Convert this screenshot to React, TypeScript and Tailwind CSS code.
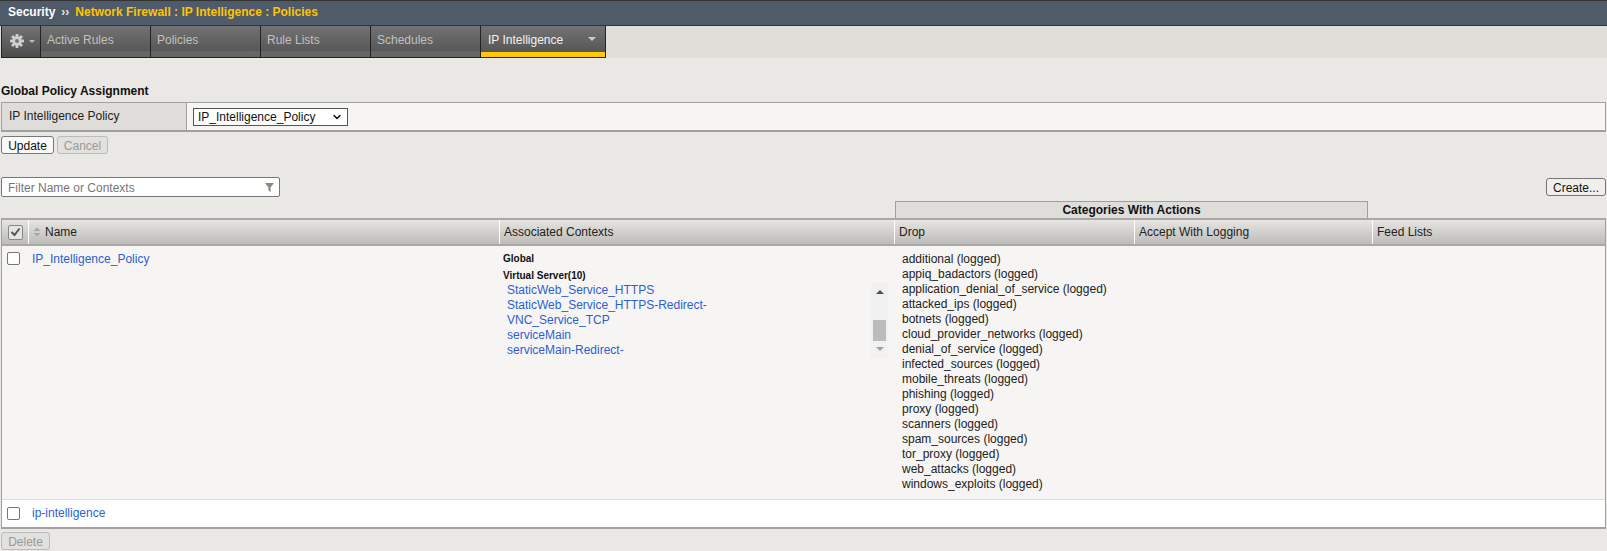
import { ChevronDown } from 'lucide-react'

const tabs = ['Active Rules', 'Policies', 'Rule Lists', 'Schedules']

const contexts = [
  'StaticWeb_Service_HTTPS',
  'StaticWeb_Service_HTTPS-Redirect-',
  'VNC_Service_TCP',
  'serviceMain',
  'serviceMain-Redirect-',
]

const dropCategories = [
  'additional',
  'appiq_badactors',
  'application_denial_of_service',
  'attacked_ips',
  'botnets',
  'cloud_provider_networks',
  'denial_of_service',
  'infected_sources',
  'mobile_threats',
  'phishing',
  'proxy',
  'scanners',
  'spam_sources',
  'tor_proxy',
  'web_attacks',
  'windows_exploits',
]

const headerCell =
  'flex items-center border-l border-white bg-gradient-to-b from-[#e6e5e1] to-[#bdbcb8] pl-[4px] text-[#222]'

const Checkbox = () => (
  <span className="block h-[13px] w-[13px] rounded-[2px] border border-[#767676] bg-white" />
)

const Gear = () => (
  <svg width="14" height="14" viewBox="0 0 14 14">
    <g fill="#cfcfcf">
      <circle cx="7" cy="7" r="4.8" />
      <rect x="5.6" y="0" width="2.8" height="14" />
      <rect x="5.6" y="0" width="2.8" height="14" transform="rotate(45 7 7)" />
      <rect x="5.6" y="0" width="2.8" height="14" transform="rotate(90 7 7)" />
      <rect x="5.6" y="0" width="2.8" height="14" transform="rotate(135 7 7)" />
    </g>
    <circle cx="7" cy="7" r="2" fill="#777" />
  </svg>
)

export default function App() {
  return (
    <div className="h-[551px] w-[1607px] overflow-hidden bg-[#e9e8e4] font-['Liberation_Sans',Arial,sans-serif] text-[12px] text-[#111]">
      {/* Breadcrumb */}
      <div className="flex h-[26px] items-center border-t border-[#333] border-b border-b-[#2f3640] bg-[#505b69] pb-[2px] pl-[8px] font-bold">
        <span className="text-white">Security</span>
        <span className="ml-[6px] mr-[6px] text-[#e8e8e8]">››</span>
        <span className="text-[#ffc400]">Network Firewall : IP Intelligence : Policies</span>
      </div>

      {/* Tabs */}
      <div className="flex h-[32px] bg-[#dfded9] pl-px">
        <div className="flex w-[39px] items-center gap-[5px] border-b border-l border-[#222] bg-gradient-to-b from-[#737373] to-[#4d4d4d] pl-[8px] pb-[2px]">
          <Gear />
          <span className="mt-[2px] h-0 w-0 border-x-[3px] border-t-[3px] border-x-transparent border-t-[#bbb]" />
        </div>
        {tabs.map((tab) => (
          <div
            key={tab}
            className="flex w-[110px] flex-col border-l border-b border-[#222] bg-gradient-to-b from-[#737373] to-[#515151] text-[#c0c0c0]"
          >
            <div className="flex flex-1 items-start pl-[6px] pt-[5px]">{tab}</div>
            <div className="h-[6px] bg-[#666]" />
          </div>
        ))}
        <div className="flex w-[126px] flex-col border-x border-b border-[#222] bg-gradient-to-b from-[#737373] to-[#515151] text-[#f2f2f2]">
          <div className="flex flex-1 items-start justify-between pl-[7px] pr-[9px] pt-[5px]">
            <span>IP Intelligence</span>
            <span className="mt-[6px] h-0 w-0 border-x-[4px] border-t-[4px] border-x-transparent border-t-[#ccc]" />
          </div>
          <div className="h-[5px] bg-[#ffc800]" />
        </div>
      </div>

      {/* Global policy */}
      <div className="pt-[26px] pl-[1px] font-bold leading-[15px] text-[#111]">Global Policy Assignment</div>
      <div className="mx-[1px] mt-[3px] flex h-[30px] border-y-[1px] border-r border-[#a0a0a0] border-b-2">
        <div className="w-[186px] border-x border-[#a0a0a0] bg-[#dedddA] pl-[7px] pt-[4px] text-[#222]">
          IP Intelligence Policy
        </div>
        <div className="flex flex-1 items-start bg-[#f6f5f3] pl-[6px] pt-[5px]">
          <div className="flex h-[18px] w-[155px] items-center justify-between border border-[#555] bg-white pl-[4px] pr-[4px] text-[#111]">
            IP_Intelligence_Policy
            <ChevronDown size={12} strokeWidth={3} />
          </div>
        </div>
      </div>

      <div className="ml-[1px] mt-[4px] flex gap-[3px]">
        <button className="h-[18px] w-[53px] rounded-[3px] border border-[#777] bg-white/80 pb-[1px] text-[#111]">Update</button>
        <button className="h-[18px] w-[51px] rounded-[3px] border border-[#bbb] bg-[#e2e1dd] pb-[1px] text-[#999]">Cancel</button>
      </div>

      {/* Filter and create */}
      <div className="mt-[23px] flex items-start justify-between pl-[1px] pr-[1px]">
        <div className="flex h-[20px] w-[279px] items-center justify-between rounded-[2px] border border-[#777] bg-white pl-[6px] pr-[5px] pt-[1px] text-[#777]">
          Filter Name or Contexts
          <svg width="9" height="9" viewBox="0 0 12 12">
            <path d="M0 0h12L7.5 5.5V12l-3-2V5.5z" fill="#8a8a80" />
          </svg>
        </div>
        <button className="mt-[1px] h-[18px] w-[60px] rounded-[3px] border border-[#777] bg-[#f0efec] pb-[1px] text-[#111]">Create...</button>
      </div>

      {/* Column group */}
      <div className="mt-[4px] ml-[895px] flex h-[17px] w-[473px] items-center justify-center border border-b-0 border-[#a0a0a0] bg-[#dedddA] font-bold">
        Categories With Actions
      </div>

      {/* Table */}
      <div className="mx-[1px] w-[1605px] border-x border-b-2 border-[#a0a0a0]">
        <div className="flex h-[28px] border-y-2 border-[#a8a8a8]">
          <div className="flex w-[26px] items-center justify-center bg-gradient-to-b from-[#e6e5e1] to-[#bdbcb8]">
            <span className="flex h-[15px] w-[15px] items-center justify-center rounded-[2px] border border-[#888] bg-[#e4e4e4]">
              <svg width="11" height="10" viewBox="0 0 11 10">
                <path d="M1.5 5l3 3 5-6.5" fill="none" stroke="#555" strokeWidth="2" />
              </svg>
            </span>
          </div>
          <div className={`${headerCell} w-[471px]`}>
            <svg width="8" height="10" viewBox="0 0 8 10" className="mr-[4px]">
              <path d="M4 0.5L7.5 4H0.5zM4 9.5L7.5 6H0.5z" fill="#a8a8a4" />
            </svg>
            Name
          </div>
          <div className={`${headerCell} w-[395px]`}>Associated Contexts</div>
          <div className={`${headerCell} w-[240px]`}>Drop</div>
          <div className={`${headerCell} w-[238px]`}>Accept With Logging</div>
          <div className={`${headerCell} flex-1`}>Feed Lists</div>
        </div>

        <div className="flex h-[254px] border-b border-[#dcdcdc] bg-[#f6f5f3]">
          <div className="w-[26px] pl-[5px] pt-[6px]">
            <Checkbox />
          </div>
          <div className="w-[471px] pl-[4px] pt-[6px] leading-[15px] text-[#2d5fd0]">IP_Intelligence_Policy</div>
          <div className="relative w-[395px] pl-[4px] pt-[5px] leading-[15px]">
            <div className="text-[10px] font-bold">Global</div>
            <div className="mt-[2px] text-[10px] font-bold">Virtual Server(10)</div>
            <div className="pl-[4px] text-[#2d5fd0]">
              {contexts.map((name) => (
                <div key={name}>{name}</div>
              ))}
            </div>
            <div className="absolute left-[372px] top-[37px] flex h-[75px] w-[17px] flex-col items-center bg-[#f1f1f1]">
              <span className="mt-[7px] h-0 w-0 border-x-[4px] border-b-[4px] border-x-transparent border-b-[#505050]" />
              <span className="mt-[26px] h-[21px] w-[13px] bg-[#bcbcbc]" />
              <span className="mt-[6px] h-0 w-0 border-x-[4px] border-t-[4px] border-x-transparent border-t-[#a0a0a0]" />
            </div>
          </div>
          <div className="pl-[8px] pt-[6px] leading-[15px] text-[#222]">
            {dropCategories.map((name) => (
              <div key={name}>{name} (logged)</div>
            ))}
          </div>
        </div>

        <div className="flex h-[27px] items-center bg-white">
          <div className="w-[26px] pl-[5px]">
            <Checkbox />
          </div>
          <div className="pb-[1px] pl-[4px] text-[#2d5fd0]">ip-intelligence</div>
        </div>
      </div>

      <button className="ml-[1px] mt-[3px] h-[18px] w-[49px] rounded-[3px] border border-[#bbb] bg-[#e2e1dd] pb-[1px] text-[#999]">Delete</button>
    </div>
  )
}
